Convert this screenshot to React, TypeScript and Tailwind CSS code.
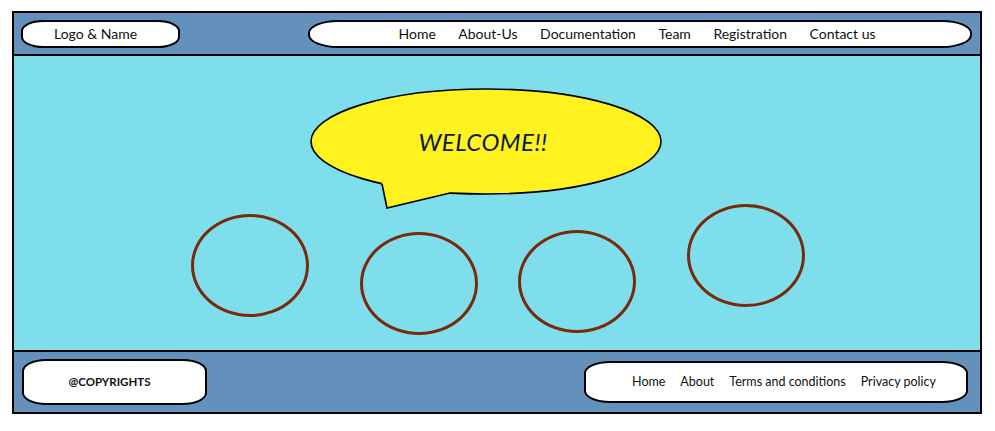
const navLinks = ['Home', 'About-Us', 'Documentation', 'Team', 'Registration', 'Contact us'];
const footerLinks = ['Home', 'About', 'Terms and conditions', 'Privacy policy'];

// placeholder circles on the hero canvas (left/top relative to hero)
const circles = [
  { left: 'left-[177px]', top: 'top-[158px]' },
  { left: 'left-[346px]', top: 'top-[176px]' },
  { left: 'left-[504px]', top: 'top-[174px]' },
  { left: 'left-[673px]', top: 'top-[148px]' },
];

function SpeechBubble() {
  return (
    <div className="absolute left-[296px] top-[32px] w-[352px] h-[122px]">
      <svg width="352" height="122" viewBox="0 0 352 122" className="absolute inset-0">
        <ellipse cx="176" cy="53.5" rx="175" ry="52.5" fill="#fff21f" stroke="#000" strokeWidth="1.6" />
        <polygon points="73,88 72,96 77,120 140,105 141,96" fill="#fff21f" />
        <polyline points="72,96 77,120 140,105" fill="none" stroke="#000" strokeWidth="1.6" strokeLinejoin="miter" />
      </svg>
      <div className="absolute left-0 top-0 w-full h-[107px] flex items-center justify-center pr-[6px]">
        <span className="italic text-[24px] tracking-[0.5px] text-[#0b1d36] font-['Lato',sans-serif]">
          WELCOME!!
        </span>
      </div>
    </div>
  );
}

export default function App() {
  return (
    <div className="min-h-screen bg-white pt-[11px] pl-[12px] font-['Lato','Noto_Sans',sans-serif] text-[#111]">
      <div className="w-[970px] border-2 border-black">
        {/* header */}
        <header className="h-[43px] bg-[#6491bb] border-b-2 border-black flex items-center px-[7px]">
          <div className="w-[159px] h-[28px] bg-white border-2 border-black rounded-[22px/11px] flex items-center pl-[31px] text-[14px]">
            Logo &amp; Name
          </div>
          <nav className="ml-auto mr-[1px] w-[664px] h-[28px] bg-white border-2 border-black rounded-[30px/13px] flex items-center justify-center gap-[22.5px] text-[14px] pr-[6px]">
            {navLinks.map((l) => (
              <a key={l} className="whitespace-nowrap">
                {l}
              </a>
            ))}
          </nav>
        </header>

        {/* hero */}
        <main className="relative h-[296px] bg-[#7edeeb] border-b-2 border-black">
          <SpeechBubble />
          {circles.map((c, i) => (
            <div
              key={i}
              className={`absolute ${c.left} ${c.top} w-[118px] h-[103px] rounded-[50%] border-[3px] border-[#7a2a0c]`}
            />
          ))}
        </main>

        {/* footer */}
        <footer className="h-[60px] bg-[#6491bb] flex items-center px-[8px]">
          <div className="w-[185px] h-[46px] bg-white border-2 border-black rounded-[24px/12px] flex items-center justify-center pr-[10px] text-[11.5px] font-bold">
            @COPYRIGHTS
          </div>
          <nav className="ml-auto mr-[4px] w-[384px] h-[42px] bg-white border-2 border-black rounded-[26px/12px] flex items-center justify-center gap-[15px] pl-[16px] text-[12.5px]">
            {footerLinks.map((l) => (
              <a key={l} className="whitespace-nowrap">
                {l}
              </a>
            ))}
          </nav>
        </footer>
      </div>
    </div>
  );
}
